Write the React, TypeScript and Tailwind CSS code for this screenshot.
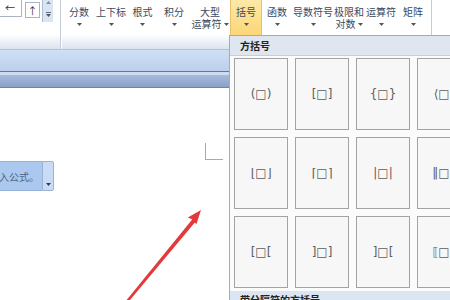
import React from 'react'

const font = { fontFamily: '"Noto Sans CJK SC", "DejaVu Sans", sans-serif' }

const ribbonButtons = [
  { lines: ['分数'], w: 'w-[32px]' },
  { lines: ['上下标'], w: 'w-[32px]' },
  { lines: ['根式'], w: 'w-[31px]' },
  { lines: ['积分'], w: 'w-[32px]' },
  { lines: ['大型', '运算符'], w: 'w-[40px]' },
  { lines: ['括号'], w: 'w-[32px]', active: true },
  { lines: ['函数'], w: 'w-[30px]' },
  { lines: ['导数符号'], w: 'w-[42px]' },
  { lines: ['极限和', '对数'], w: 'w-[30px]' },
  { lines: ['运算符'], w: 'w-[34px]' },
  { lines: ['矩阵'], w: 'w-[30px]' },
]

const brackets = [
  '(□)', '[□]', '{□}', '⟨□⟩',
  '⌊□⌋', '⌈□⌉', '|□|', '‖□‖',
  '[□[', ']□]', ']□[', '⟦□⟧',
]

function Caret() {
  return (
    <svg width="5" height="3" viewBox="0 0 5 3" className="inline-block">
      <path d="M0 0h5L2.5 3z" fill="#555" />
    </svg>
  )
}

function RibbonButton({ lines, w, active }: { lines: string[]; w: string; active?: boolean }) {
  return (
    <div
      className={`${w} h-[35px] flex flex-col items-center pt-[6px] text-[10px] leading-[12px] text-[#3a4a62] ${
        active ? 'bg-linear-to-b from-[#fde9a6] to-[#fbd676] border-x border-[#e6c172]' : ''
      }`}
    >
      <span className="whitespace-nowrap h-[12px] overflow-visible">{lines[0]}</span>
      <span className="whitespace-nowrap flex items-center gap-[2px] h-[12px]">
        {lines[1] && <span>{lines[1]}</span>}
        <Caret />
      </span>
    </div>
  )
}

export default function App() {
  return (
    <div className="relative w-[450px] h-[300px] overflow-hidden bg-white" style={font}>
      {/* Ribbon */}
      <div className="h-[50px] flex bg-linear-to-b from-white from-70% to-[#dbe3ee] border-b border-[#b4c1d4]">
        {/* gallery remnant */}
        <div className="w-[60px] flex items-start">
          <div className="w-[22px] h-[17px] border-b border-r border-[#aab4c2] bg-white pl-[5px] text-[10px] leading-[16px] text-[#333]">
            ←
          </div>
          <div className="ml-[3px] mt-[2px] w-[15px] h-[16px] border border-[#aab4c2] bg-white flex items-center justify-center text-[10px] text-[#333]">
            ↑
          </div>
          <div className="ml-[2px] w-[11px] h-[22px] border-l border-[#aebdd2] bg-[#dae5f3] flex flex-col items-center justify-between py-[1px]">
            <svg width="5" height="3" viewBox="0 0 5 3">
              <path d="M0 3h5L2.5 0z" fill="#7d8fa8" />
            </svg>
            <div className="flex flex-col items-center gap-[1px] mb-[4px]">
              <div className="w-[5px] h-px bg-[#5a6c86]" />
              <Caret />
            </div>
          </div>
        </div>
        <div className="w-px bg-[#c3ccd8]" />
        <div className="w-px bg-white" />
        <div className="flex items-start pl-[1px]">
          {ribbonButtons.map(b => (
            <RibbonButton key={b.lines.join('')} {...b} />
          ))}
        </div>
        <div className="ml-[3px] w-px bg-[#c3ccd8]" />
        <div className="w-px bg-white" />
      </div>

      {/* Window bands */}
      <div className="h-[21px] bg-linear-to-b from-[#d0e0f5] to-[#bccfeb]" />
      <div className="h-px bg-[#5e79a5]" />
      <div className="h-[3px] bg-[#cddcf0]" />
      <div className="h-[12px] bg-linear-to-b from-[#a7bcdc] to-[#8aa1c7]" />
      <div className="h-px bg-[#6d84ab]" />

      {/* Document */}
      <div className="flex flex-col">
        <div className="mt-[55px] ml-[205px] w-[18px] h-[17px] border-l border-b border-[#a9a9a9]" />
        <div className="mt-px flex h-[30px] w-[54px]">
          <div className="w-[42px] overflow-hidden flex justify-end items-center pr-[3px] bg-[#abc8ee] border-y border-[#98b2d8] text-[10px] text-[#4f6382] whitespace-nowrap">
            在此处键入公式。
          </div>
          <div className="w-[12px] flex items-end justify-center pb-[4px] bg-[#cadcf3] border border-[#98b2d8] rounded-r-[2px]">
            <svg width="5" height="3" viewBox="0 0 5 3">
              <path d="M0 0h5L2.5 3z" fill="#2e3e58" />
            </svg>
          </div>
        </div>
      </div>

      {/* Bracket dropdown */}
      <div className="absolute left-[229px] top-[35px] w-[240px] h-[280px] bg-[#fbfbfb] border-l border-t border-[#a1acba]">
        <div className="h-[20px] bg-[#dfe6ef] border-b border-[#c6cfdb] pl-[10px] text-[10px] leading-[19px] font-bold text-[#222]">
          方括号
        </div>
        <div className="pt-[2px] pl-[4px] grid grid-cols-[54px_54px_54px_54px] gap-[7px]">
          {brackets.map(b => (
            <div
              key={b}
              className="h-[72px] border border-[#a3a3a3] bg-[#f7f7f7] flex items-center justify-center text-[12px] text-[#5c5c5c]"
              style={{ fontFamily: '"DejaVu Sans", sans-serif' }}
            >
              {b}
            </div>
          ))}
        </div>
        <div className="mt-[3px] h-[20px] bg-[#dbe6f2] pl-[10px] text-[10px] leading-[16px] pt-[1px] font-bold text-[#222]">
          带分隔符的方括号
        </div>
      </div>

      {/* Red annotation arrow */}
      <svg className="absolute inset-0 pointer-events-none" width="450" height="300" viewBox="0 0 450 300">
        <path d="M126.6 300 L193.2 218.2 L196.3 220.8 L130 300 Z" fill="#e4393a" />
        <path d="M201 210 L196.4 224.2 L192.4 219.6 L187.8 217.4 Z" fill="#e4393a" />
      </svg>
    </div>
  )
}
